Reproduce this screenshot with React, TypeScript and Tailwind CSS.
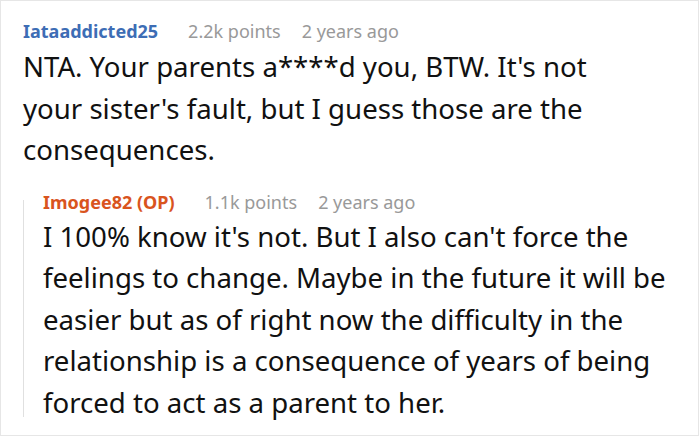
const comment = {
  author: "Iataaddicted25",
  points: "2.2k points",
  time: "2 years ago",
  body: "NTA. Your parents a****d you, BTW. It's not your sister's fault, but I guess those are the consequences.",
};

const reply = {
  author: "Imogee82 (OP)",
  points: "1.1k points",
  time: "2 years ago",
  body: "I 100% know it's not. But I also can't force the feelings to change. Maybe in the future it will be easier but as of right now the difficulty in the relationship is a consequence of years of being forced to act as a parent to her.",
};

function Meta({ author, points, time, color }: { author: string; points: string; time: string; color: string }) {
  return (
    <div className="flex items-baseline text-[18px] leading-[24px]">
      <span className={`font-bold ${color}`}>{author}</span>
      <span className="ml-[30px] text-[#999999]">{points}</span>
      <span className="ml-[21px] text-[#999999]">{time}</span>
    </div>
  );
}

export default function App() {
  return (
    <main
      className="h-[436px] w-[700px] overflow-hidden bg-white"
      style={{ fontFamily: '"Noto Sans", sans-serif' }}
    >
      <div className="h-[436px] w-[699px] border border-[#e6e6e6] pl-[22px] pt-[18px]">
        <Meta {...comment} color="text-[#3d6db5]" />
        <p className="mt-[3px] w-[620px] text-[27.6px] leading-[41.5px] text-[#111111]">
          {comment.body}
        </p>

        <div className="mt-[19px] flex">
          <div className="mb-[6px] mt-[10px] w-px shrink-0 bg-[#e0e0e0]" />
          <div className="pl-[19px]">
            <Meta {...reply} color="text-[#d9541e]" />
            <p className="mt-[2px] w-[636px] text-[27.6px] leading-[41.5px] text-[#111111]">
              {reply.body}
            </p>
          </div>
        </div>
      </div>
    </main>
  );
}
